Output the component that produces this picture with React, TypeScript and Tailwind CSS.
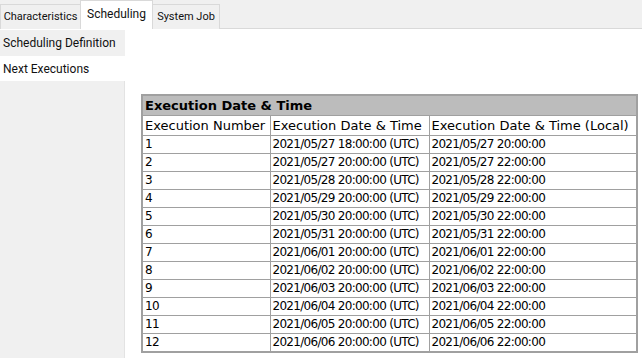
const rows = [
  ["1", "2021/05/27 18:00:00 (UTC)", "2021/05/27 20:00:00"],
  ["2", "2021/05/27 20:00:00 (UTC)", "2021/05/27 22:00:00"],
  ["3", "2021/05/28 20:00:00 (UTC)", "2021/05/28 22:00:00"],
  ["4", "2021/05/29 20:00:00 (UTC)", "2021/05/29 22:00:00"],
  ["5", "2021/05/30 20:00:00 (UTC)", "2021/05/30 22:00:00"],
  ["6", "2021/05/31 20:00:00 (UTC)", "2021/05/31 22:00:00"],
  ["7", "2021/06/01 20:00:00 (UTC)", "2021/06/01 22:00:00"],
  ["8", "2021/06/02 20:00:00 (UTC)", "2021/06/02 22:00:00"],
  ["9", "2021/06/03 20:00:00 (UTC)", "2021/06/03 22:00:00"],
  ["10", "2021/06/04 20:00:00 (UTC)", "2021/06/04 22:00:00"],
  ["11", "2021/06/05 20:00:00 (UTC)", "2021/06/05 22:00:00"],
  ["12", "2021/06/06 20:00:00 (UTC)", "2021/06/06 22:00:00"],
];

const cell = "border border-[#a0a0a0] px-[2px] text-left font-normal whitespace-nowrap overflow-hidden";
const data = `${cell} text-[12px] tracking-[-0.7px]`;

export default function App() {
  return (
    <div className="w-[642px] h-[358px] flex flex-col bg-white overflow-hidden font-[family-name:Roboto,sans-serif] text-[11px] text-[#111]">
      {/* Tabs */}
      <div className="h-[29px] flex items-end bg-[#f0f0f0] border-b border-[#d9d9d9] shrink-0 whitespace-nowrap">
        <div className="h-[25px] w-[81px] flex items-center justify-center bg-[#f0f0f0] border border-b-0 border-[#d9d9d9] -mb-px">
          Characteristics
        </div>
        <div className="h-[29px] w-[73px] flex items-center justify-center bg-white border border-b-0 border-[#d9d9d9] -mb-px -ml-px pb-[3px] text-[12px]">
          Scheduling
        </div>
        <div className="h-[25px] w-[68px] flex items-center justify-center bg-[#f0f0f0] border border-b-0 border-[#d9d9d9] -mb-px -ml-px">
          System Job
        </div>
      </div>

      <div className="flex flex-1 min-h-0">
        {/* Left navigation */}
        <div className="w-[125px] flex flex-col shrink-0 text-[12px] whitespace-nowrap">
          <div className="h-[26px] mt-[1px] flex items-center pl-[3px] bg-[#f0f0f0]">
            Scheduling Definition
          </div>
          <div className="h-[25px] flex items-center pl-[3px] bg-white">
            Next Executions
          </div>
          <div className="flex-1 bg-[#f0f0f0] border-r border-[#e3e3e3]" />
        </div>

        {/* Content */}
        <div className="flex-1 pl-[16px] pt-[65px]">
          <div className="h-[262px] overflow-hidden">
            <table className="table-fixed border-collapse border-2 border-[#a0a0a0] font-[family-name:'DejaVu_Sans',Verdana,sans-serif] text-[13px] leading-[17px] w-[497px] text-black">
              <colgroup>
                <col className="w-[128px]" />
                <col className="w-[159px]" />
                <col />
              </colgroup>
              <thead>
                <tr className="h-[20px]">
                  <th colSpan={3} className={`${cell} bg-[#bcbcbc] !font-bold`}>
                    Execution Date &amp; Time
                  </th>
                </tr>
                <tr className="h-[20px]">
                  <th className={cell}>Execution Number</th>
                  <th className={cell}>Execution Date &amp; Time</th>
                  <th className={cell}>Execution Date &amp; Time (Local)</th>
                </tr>
              </thead>
              <tbody>
                {rows.map((r) => (
                  <tr key={r[0]} className="h-[18px]">
                    <td className={data}>{r[0]}</td>
                    <td className={data}>{r[1]}</td>
                    <td className={data}>{r[2]}</td>
                  </tr>
                ))}
              </tbody>
            </table>
          </div>
        </div>
      </div>
    </div>
  );
}
